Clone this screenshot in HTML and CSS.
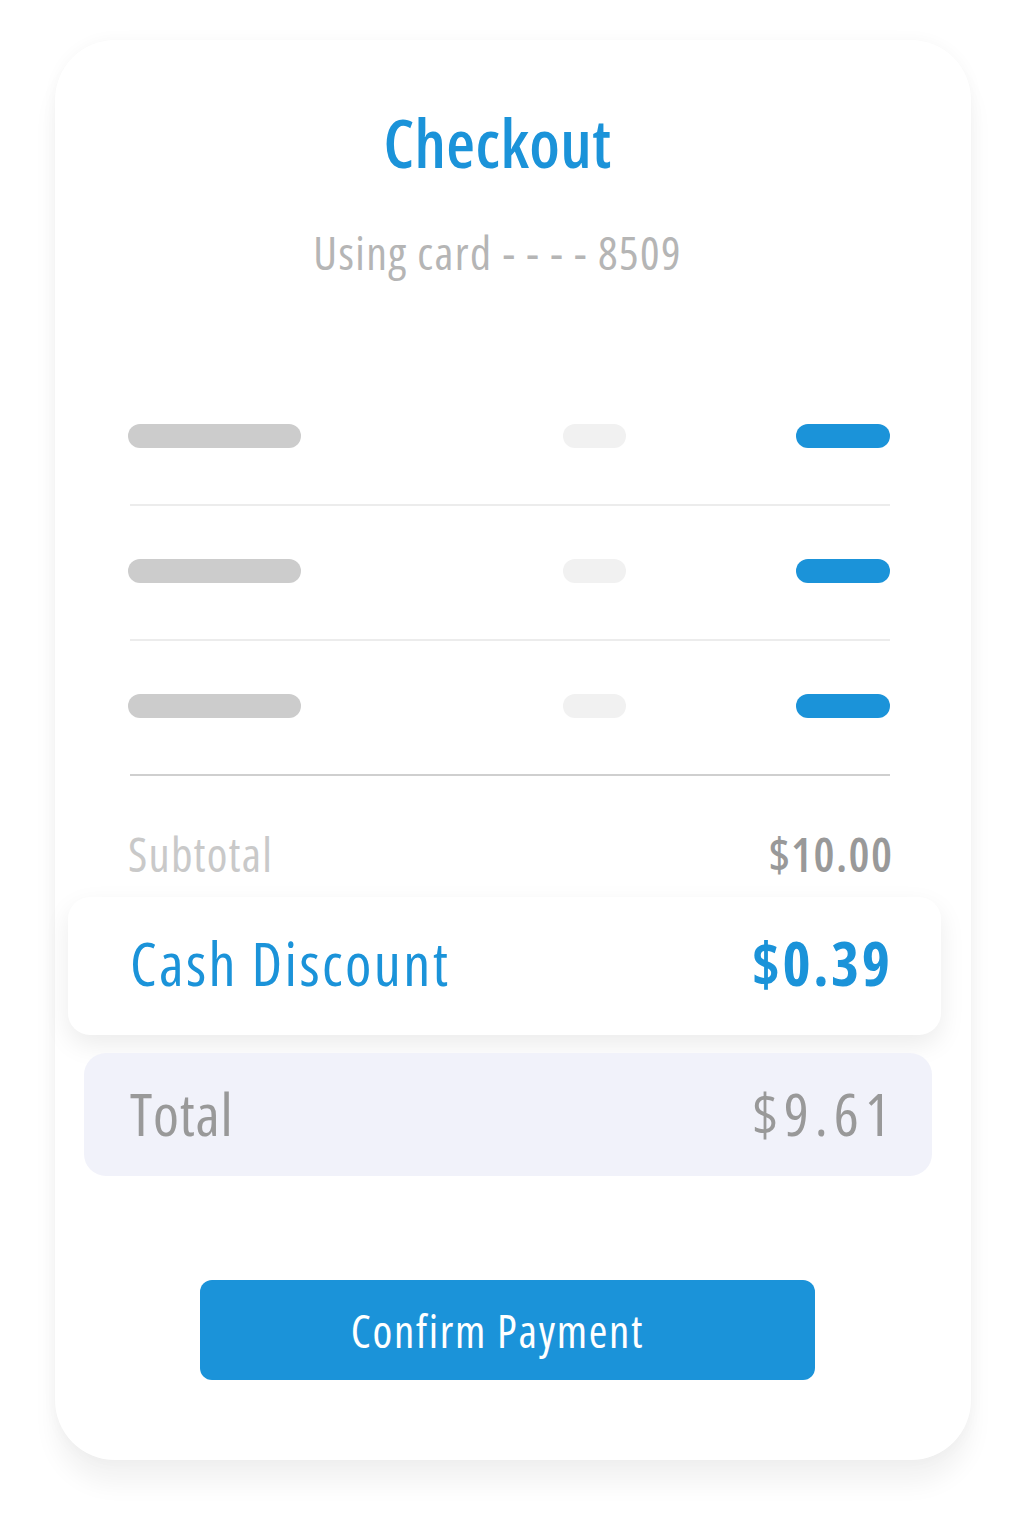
FILE: index.html
```html
<!DOCTYPE html>
<html lang="en">
<head>
<meta charset="utf-8">
<title>Checkout</title>
<link rel="stylesheet" href="styles.css">
</head>
<body>
<main class="card">
  <header class="head">
    <h1 class="title">Checkout</h1>
    <p class="subtitle">Using card - - - - 8509</p>
  </header>
  <ul class="items">
    <li class="item"><span class="bar bar-name"></span><span class="bar bar-qty"></span><span class="bar bar-price"></span></li>
    <li class="item"><span class="bar bar-name"></span><span class="bar bar-qty"></span><span class="bar bar-price"></span></li>
    <li class="item item-last"><span class="bar bar-name"></span><span class="bar bar-qty"></span><span class="bar bar-price"></span></li>
  </ul>
  <div class="subtotal">
    <span class="subtotal-label">Subtotal</span>
    <span class="subtotal-value">$10.00</span>
  </div>
  <div class="discount">
    <span class="discount-label">Cash Discount</span>
    <span class="discount-value">$0.39</span>
  </div>
  <div class="total">
    <span class="total-label">Total</span>
    <span class="total-value">$9.61</span>
  </div>
  <button class="confirm" type="button">Confirm Payment</button>
</main>
</body>
</html>
```
FILE: styles.css
```css
* { box-sizing: border-box; }
html, body { margin: 0; padding: 0; background: #ffffff; }
body {
  font-family: "Open Sans", "DejaVu Sans Condensed", sans-serif;
  font-stretch: 75%;
  width: 1033px;
  min-height: 1536px;
  padding: 40px 0 0 55px;
}
.card {
  width: 916px;
  height: 1420px;
  background: #ffffff;
  border-radius: 60px;
  box-shadow: 0 24px 24px rgba(0,0,0,0.05), 0 0 16px rgba(0,0,0,0.035);
  padding: 62px 81px 0 73px;
  display: flex;
  flex-direction: column;
}
.head {
  padding-right: 23px;
  text-align: center;
}
.title {
  margin: 0;
  font-size: 66px;
  line-height: 80px;
  font-weight: 600;
  letter-spacing: 0.4px;
  color: #1b93d9;
}
.subtitle {
  margin: 40px 0 0;
  font-size: 46px;
  line-height: 60px;
  font-weight: 400;
  letter-spacing: 1.4px;
  color: #b5b5b5;
}
.items {
  list-style: none;
  margin: 89px 0 0;
  padding: 0;
}
.item {
  display: grid;
  grid-template-columns: 433px 63px 1fr;
  align-items: center;
  padding: 53px 0 56px;
  border-bottom: 2px solid #ececec;
  margin-left: 2px;
}
.item-last { border-bottom: 2px solid #cfcfcf; }
.bar {
  display: block;
  height: 24px;
  border-radius: 12px;
}
.bar-name { width: 173px; background: #cccccc; margin-left: -2px; }
.bar-qty { width: 63px; background: #f1f1f1; }
.bar-price { width: 94px; background: #1b93d9; justify-self: end; }

.subtotal {
  margin: 53px -2px 0 0;
  display: flex;
  justify-content: space-between;
  align-items: center;
  font-size: 47px;
  line-height: 50px;
}
.subtotal-label { color: #c9c9c9; letter-spacing: 1.2px; }
.subtotal-value {
  color: #999999;
  font-weight: 600;
  letter-spacing: 1.4px;
  margin-right: -1.4px;
}

.discount {
  margin: 18px -51px 0 -60px;
  padding: 31px 51px 37px 62px;
  background: #ffffff;
  border-radius: 22px;
  box-shadow: 0 10px 26px rgba(0,0,0,0.08);
  display: flex;
  justify-content: space-between;
  align-items: center;
  font-size: 60px;
  line-height: 70px;
  color: #1b93d9;
}
.discount-label { letter-spacing: 2.4px; }
.discount-value {
  font-weight: 700;
  letter-spacing: 2.6px;
  margin-right: -2.6px;
}

.total {
  margin: 18px -42px 0 -44px;
  padding: 25px 42px 28px 46px;
  background: #f1f2fa;
  border-radius: 22px;
  display: flex;
  justify-content: space-between;
  align-items: center;
  font-size: 59px;
  line-height: 70px;
  color: #999999;
}
.total-label { letter-spacing: 0.8px; }
.total-value {
  letter-spacing: 6px;
  margin-right: -6px;
}

.confirm {
  margin: 104px 0 0 72px;
  width: 615px;
  height: 100px;
  border: 0;
  border-radius: 12px;
  background: #1b93d9;
  color: #ffffff;
  font-family: inherit;
  font-stretch: 75%;
  font-size: 45px;
  font-weight: 500;
  letter-spacing: 1.7px;
  padding: 0 20px 0 0;
  display: flex;
  align-items: center;
  justify-content: center;
}
```
